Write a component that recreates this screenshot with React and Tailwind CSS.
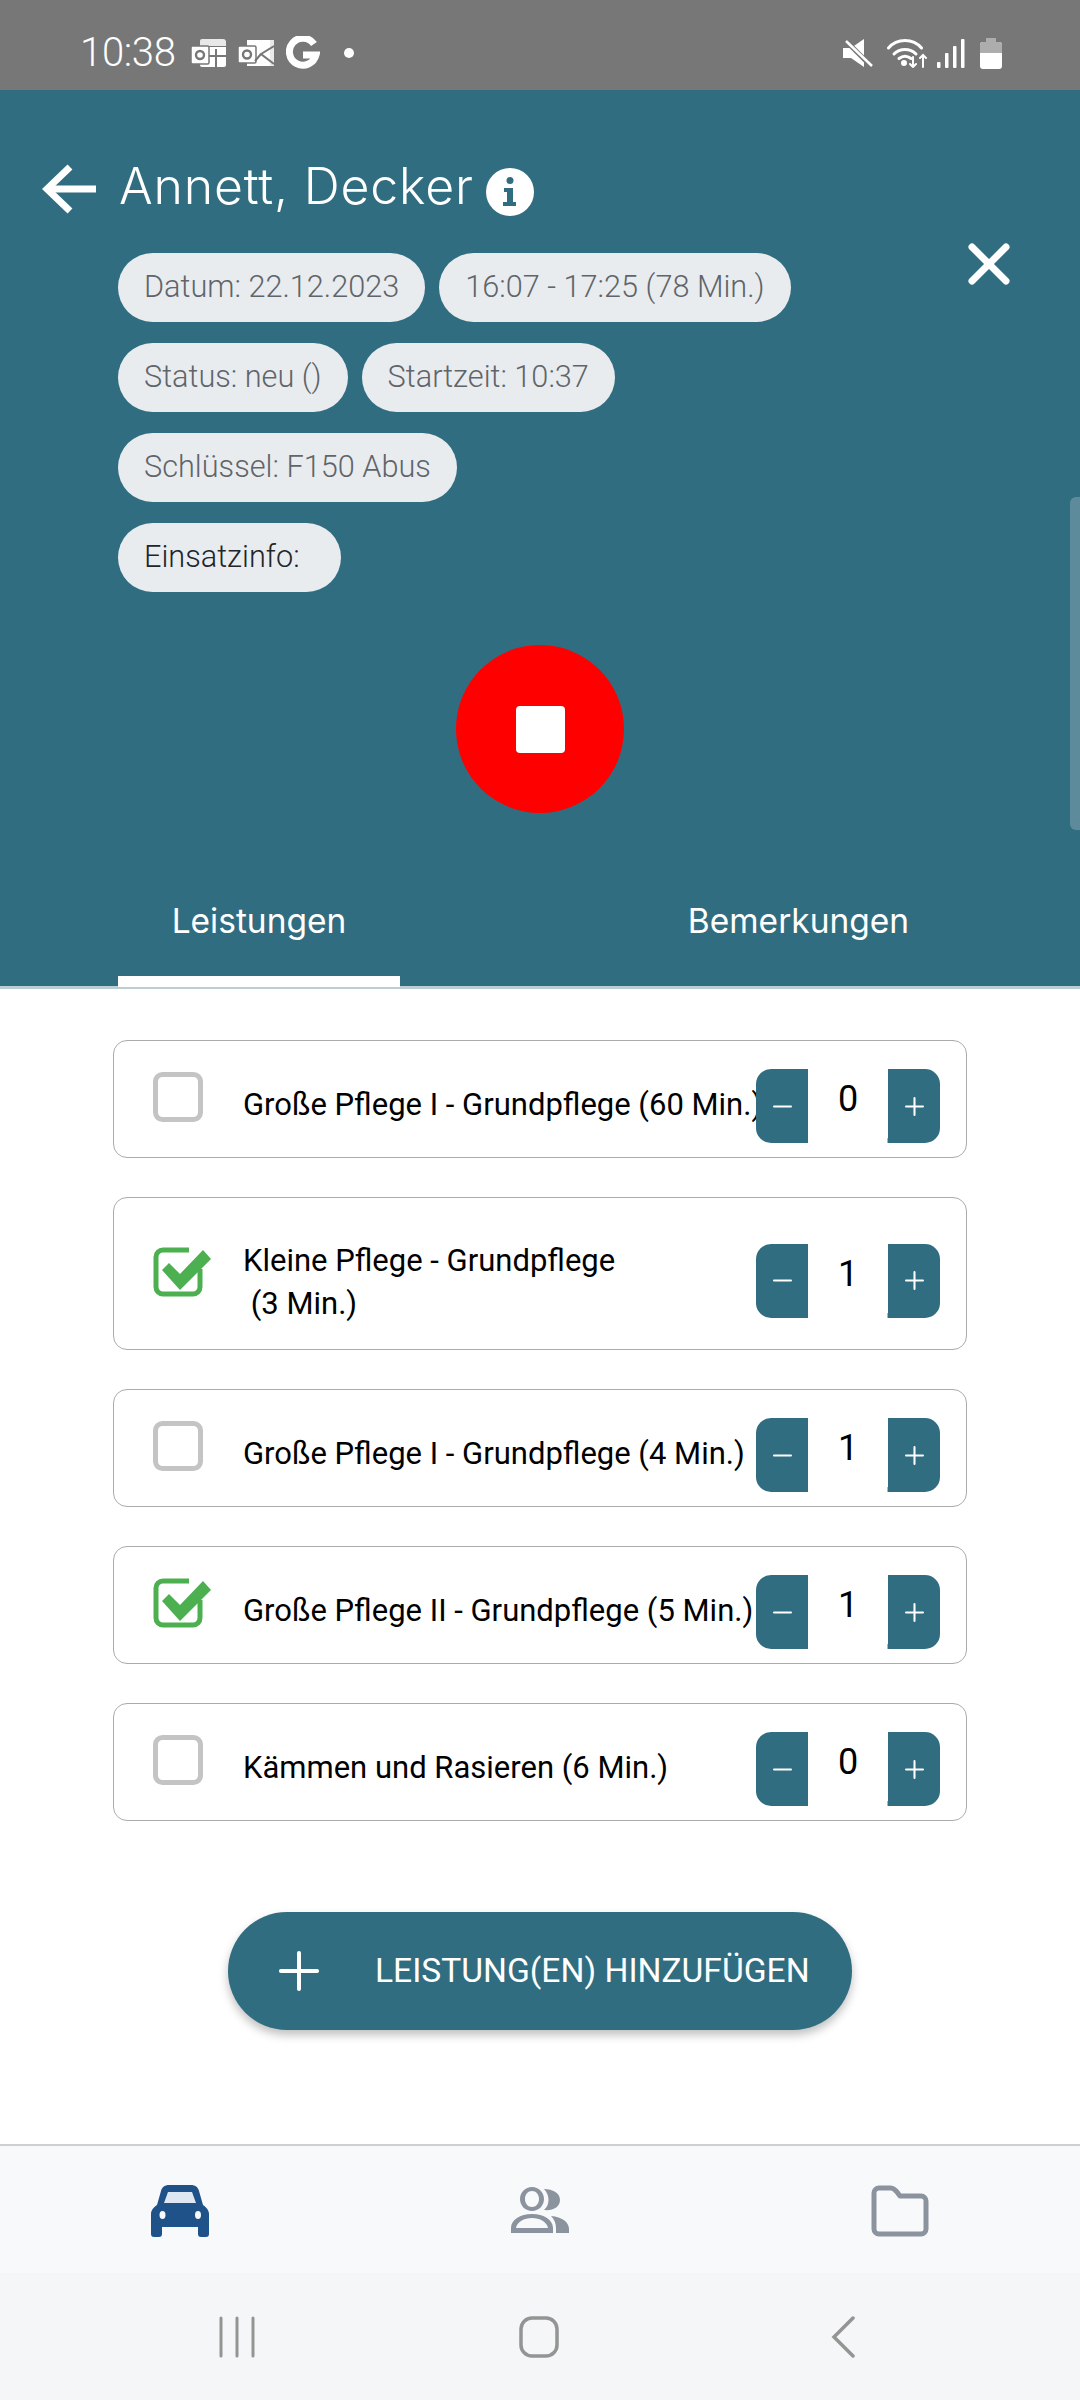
import React from 'react';
import { Plus, Minus } from 'lucide-react';

const services = [
  { label: 'Große Pflege I - Grundpflege (60 Min.)', qty: 0, done: false },
  { label: 'Kleine Pflege - Grundpflege\n (3 Min.)', qty: 1, done: true },
  { label: 'Große Pflege I - Grundpflege (4 Min.)', qty: 1, done: false },
  { label: 'Große Pflege II - Grundpflege (5 Min.)', qty: 1, done: true },
  { label: 'Kämmen und Rasieren (6 Min.)', qty: 0, done: false },
];

const pillRows = [
  ['Datum: 22.12.2023', '16:07 - 17:25 (78 Min.)'],
  ['Status: neu ()', 'Startzeit: 10:37'],
  ['Schlüssel: F150 Abus'],
];

const StatusBar = () => (
  <div className="h-[90px] shrink-0 bg-[#777777] flex items-center justify-between pl-[80px] pr-[78px] pt-[16px] text-white">
    <div className="flex items-center">
      <span className="text-[40px] font-light leading-none font-['Roboto',sans-serif] tracking-[-0.3px]">10:38</span>
      {/* office app notification */}
      <svg viewBox="0 0 35 30" className="w-[35px] h-[30px] ml-[15px]">
        <path d="M11 1h21a3 3 0 0 1 3 3v4H9V3a2 2 0 0 1 2-2z" fill="#e8e8e8" />
        <path d="M9 9h26v18a2 2 0 0 1-2 2H11a2 2 0 0 1-2-2z" fill="#fff" />
        <rect x="0" y="8" width="18" height="18" rx="1.5" fill="#fff" stroke="#777" strokeWidth="1.5" />
        <circle cx="9" cy="17" r="4" fill="none" stroke="#777" strokeWidth="2.4" />
        <path d="M25 11v18M18 18h17" stroke="#777" strokeWidth="2" fill="none" />
      </svg>
      {/* outlook notification */}
      <svg viewBox="0 0 36 30" className="w-[36px] h-[30px] ml-[12px]">
        <path d="M9 2h23v26H9z" fill="#fff" />
        <path d="M32 2l4 0v26h-4z" fill="#e8e8e8" />
        <rect x="0" y="8" width="18" height="17" rx="1.5" fill="#fff" stroke="#777" strokeWidth="1.5" />
        <circle cx="9" cy="16.500" r="4" fill="none" stroke="#777" strokeWidth="2.4" />
        <path d="M36 8L23 16l13 10M23 16l-6 7" stroke="#777" strokeWidth="2" fill="none" />
      </svg>
      {/* Google mark */}
      <svg viewBox="0 0 34 34" className="w-[34px] h-[34px] ml-[12px]" fill="none" stroke="#fff" strokeWidth="7">
        <path d="M28 8A13.5 13.5 0 1 0 30 19H17" />
      </svg>
      <span className="ml-[24px] w-[10px] h-[10px] rounded-full bg-white" />
    </div>
    <div className="flex items-center">
      <svg viewBox="0 0 30 30" className="w-[30px] h-[30px]">
        <path d="M0 10h8l13-9v28L8 20H0z" fill="#fff" />
        <path d="M1 1l27 27" stroke="#777" strokeWidth="5" />
        <path d="M3 3l26 25" stroke="#fff" strokeWidth="2.500" />
      </svg>
      <svg viewBox="0 0 42 30" className="w-[42px] h-[30px] ml-[14px]" fill="none" stroke="#fff" strokeWidth="3" strokeLinecap="round">
        <path d="M1.500 10C10 0 26 0 34.500 10" />
        <path d="M7 16c6-6 16-6 22 0" />
        <path d="M12 20.500c4-3 8-3 12 0" />
        <circle cx="17" cy="25" r="1.500" fill="#fff" />
        <path d="M26 19v10M23 26l3 3 3-3M36 29V17M33 20l3-3 3 3" strokeWidth="2" />
      </svg>
      <svg viewBox="0 0 28 30" className="w-[28px] h-[30px] ml-[8px]" fill="#fff">
        <rect x="0" y="24" width="3.500" height="6" rx="1" />
        <rect x="8" y="15" width="3.500" height="15" rx="1" />
        <rect x="16" y="8" width="3.500" height="22" rx="1" />
        <rect x="24" y="1" width="3.500" height="29" rx="1" />
      </svg>
      <svg viewBox="0 0 22 31" className="w-[22px] h-[31px] ml-[15px]">
        <path d="M6 0h10v4h3a3 3 0 0 1 3 3v21a3 3 0 0 1-3 3H3a3 3 0 0 1-3-3V7a3 3 0 0 1 3-3h3z" fill="#fff" />
        <path d="M6 0h10v4h3a3 3 0 0 1 3 3v8H0V7a3 3 0 0 1 3-3h3z" fill="#adadad" />
      </svg>
    </div>
  </div>
);

const BackArrow = () => (
  <svg viewBox="0 0 54 50" className="w-[54px] h-[50px]" fill="none" stroke="#fff" strokeWidth="7">
    <path d="M54 25H6" />
    <path d="M28 3L5 25l23 22" />
  </svg>
);

const InfoBadge = () => (
  <svg viewBox="0 0 48 48" className="w-[48px] h-[48px] ml-[12px] mt-[6px]">
    <circle cx="24" cy="24" r="24" fill="#fff" />
    <circle cx="24" cy="12.500" r="3.500" fill="#316d80" />
    <path d="M18 20h9v14h3v4H17v-4h4v-10h-3z" fill="#316d80" />
  </svg>
);

const Pill = ({ children, dark }) => (
  <span className={`h-[69px] px-[26px] rounded-full bg-[#e9ecef] text-[30.7px] font-light flex items-center font-['Roboto',sans-serif] whitespace-pre ${dark ? 'text-[#212529]' : 'text-[#5f656a]'}`}>
    {children}
  </span>
);

const Header = () => (
  <div className="h-[899px] shrink-0 bg-[#316d80] relative flex flex-col">
    <div className="flex items-center pl-[42px] pt-[72px]">
      <BackArrow />
      <h1 className="ml-[23px] text-[50px] leading-[60px] font-light text-white font-['Inter',sans-serif] tracking-[0.8px] -mt-[6px]">
        Annett, Decker
      </h1>
      <InfoBadge />
    </div>
    <div className="flex justify-between pl-[118px] pr-[70px] mt-[37px]">
      <div className="flex flex-col gap-[21px]">
        {pillRows.map((row) => (
          <div key={row[0]} className="flex gap-[14px]">
            {row.map((text) => (
              <Pill key={text}>{text}</Pill>
            ))}
          </div>
        ))}
        <div className="flex">
          <Pill dark>{'Einsatzinfo:  '}</Pill>
        </div>
      </div>
      <svg viewBox="0 0 42 42" className="w-[42px] h-[42px] mt-[-10px]" stroke="#fff" strokeWidth="7" strokeLinecap="round">
        <path d="M4 4l34 34M38 4L4 38" />
      </svg>
    </div>
    <div className="self-center mt-[53px] w-[168px] h-[168px] rounded-full bg-[#ff0000] flex items-center justify-center">
      <span className="w-[49px] h-[47px] rounded-[4px] bg-white" />
    </div>
    {/* scroll thumb along the header edge */}
    <div className="absolute right-0 top-[407px] w-[10px] h-[333px] rounded-l-[6px] bg-[#5d8b9b]" />
    <div className="mt-auto relative flex border-b-[3px] border-[#bccdd3] h-[95px]">
      <div className="ml-[118px] mt-[7px] w-[282px] h-[40px] text-center text-white text-[33.5px] font-['Inter',sans-serif] leading-[40px] relative">
        Leistungen
        <span className="absolute left-0 right-0 top-[75px] h-[11px] bg-white" />
      </div>
      <div className="ml-[237px] mt-[7px] w-[323px] h-[40px] text-center text-white text-[33.5px] font-['Inter',sans-serif] leading-[40px]">
        Bemerkungen
      </div>
    </div>
  </div>
);

const CheckMark = ({ done }) =>
  done ? (
    <svg viewBox="0 0 58 50" className="w-[58px] h-[50px] shrink-0">
      <path d="M36 3H10a7 7 0 0 0-7 7v30a7 7 0 0 0 7 7h30a7 7 0 0 0 7-7V22" fill="none" stroke="#4caf50" strokeWidth="5" />
      <path d="M9 23l7-7 11 11L50 3l8 9-31 31z" fill="#4caf50" />
    </svg>
  ) : (
    <svg viewBox="0 0 58 50" className="w-[58px] h-[50px] shrink-0">
      <rect x="2.500" y="2.500" width="45" height="45" rx="7" fill="none" stroke="#c4c4c4" strokeWidth="5" />
    </svg>
  );

const Stepper = ({ qty }) => (
  <div className="relative z-10 flex mt-[14px] h-[74px] w-[184px] shrink-0">
    <div className="w-[52px] rounded-l-[15px] bg-[#316d80] flex items-center justify-center text-white">
      <Minus size={29} strokeWidth={1.7} />
    </div>
    <div className="flex-1 bg-white flex justify-center pt-[7px] text-[36px] leading-[46px] text-black font-['Roboto',sans-serif]">
      {qty}
    </div>
    <div className="w-[52px] rounded-r-[15px] bg-[#316d80] flex items-center justify-center text-white">
      <Plus size={29} strokeWidth={1.7} />
    </div>
    <span className="absolute left-[131px] bottom-0 w-px h-[5px] bg-[#b5b5b5]" />
  </div>
);

const ServiceRow = ({ label, qty, done }) => {
  const twoLines = label.includes('\n');
  return (
    <div className={`flex items-center border border-[#ababab] rounded-[14px] pl-[39px] ${twoLines ? 'h-[153px]' : 'h-[118px]'}`}>
      <div className="-mt-[4px]">
        <CheckMark done={done} />
      </div>
      <p className={`ml-[32px] w-[513px] shrink-0 whitespace-pre text-[31px] text-black font-['Roboto',sans-serif] ${twoLines ? 'mt-[17px] leading-[43px]' : 'mt-[12px] leading-[42px]'}`}>
        {label}
      </p>
      <Stepper qty={qty} />
    </div>
  );
};

const BottomNav = () => (
  <div className="mt-auto h-[129px] shrink-0 bg-[#f8f9fb] border-t-[2px] border-[#cfcfcf] flex items-start pt-[39px]">
    <svg viewBox="0 0 58 52" className="w-[58px] h-[52px] ml-[151px]">
      <path d="M18 0h22c4 0 7 2 8 6l4 14c3 2 6 5 6 9v20a3 3 0 0 1-3 3h-5a3 3 0 0 1-3-3v-7H11v7a3 3 0 0 1-3 3H3a3 3 0 0 1-3-3V29c0-4 3-7 6-9l4-14c1-4 4-6 8-6z" fill="#1f5288" />
      <path d="M13 18l4-11h24l4 11z" fill="#dfe8f2" />
      <ellipse cx="11.500" cy="30" rx="3" ry="4" fill="#f8f9fb" />
      <ellipse cx="47" cy="30" rx="3" ry="4" fill="#f8f9fb" />
    </svg>
    <svg viewBox="0 0 58 46" className="w-[58px] h-[46px] ml-[302px] mt-[2px]" fill="#8b949e">
      <path fillRule="evenodd" d="M21 0c6.500 0 12 5 12 12s-5.500 12-12 12S9 19 9 12 14.500 0 21 0zm0 4c-4 0-7 3.500-7 8s3 8 7 8 7-3.500 7-8-3-8-7-8z" />
      <path d="M33 2c9 0 16 4 16 11s-7 11-16 10c3-3 4.500-6 4.500-10S36 5 33 2z" />
      <path fillRule="evenodd" d="M0 46v-5C0 33 9 27 21 27s21 6 21 14v5zm5-5h32c-1-6-8-10-16-10S6 35 5 41z" />
      <path d="M40 29c11 1 18 6 18 13v4H45v-5c0-5-2-9-5-12z" />
    </svg>
    <svg viewBox="0 0 58 52" className="w-[58px] h-[52px] ml-[302px]" fill="none" stroke="#8b949e" strokeWidth="5">
      <path d="M3 8a5 5 0 0 1 5-5h12c3 0 4 2 6 4l3 4h21a5 5 0 0 1 5 5v28a5 5 0 0 1-5 5H8a5 5 0 0 1-5-5z" strokeLinejoin="round" />
    </svg>
  </div>
);

const SystemNav = () => (
  <div className="h-[127px] shrink-0 bg-[#f5f6f7] flex items-start pt-[43px]">
    <svg viewBox="0 0 36 42" className="w-[36px] h-[42px] ml-[219px]" stroke="#949494" strokeWidth="3" strokeLinecap="round">
      <path d="M2 2v38M18 2v38M34 2v38" />
    </svg>
    <svg viewBox="0 0 40 42" className="w-[40px] h-[42px] ml-[264px]" fill="none" stroke="#949494" strokeWidth="3.500">
      <rect x="2" y="2" width="36" height="38" rx="11" />
    </svg>
    <svg viewBox="0 0 24 42" className="w-[24px] h-[42px] ml-[272px]" fill="none" stroke="#949494" strokeWidth="3.500" strokeLinecap="round">
      <path d="M22 2L3 21l19 19" />
    </svg>
  </div>
);

export default function App() {
  return (
    <div className="w-[1080px] h-[2400px] bg-white flex flex-col overflow-hidden font-['Roboto',sans-serif]">
      <StatusBar />
      <Header />
      <div className="flex flex-col items-stretch pl-[113px] pr-[113px] pt-[51px] gap-[39px]">
        {services.map((s) => (
          <ServiceRow key={s.label} {...s} />
        ))}
      </div>
      <div className="flex justify-center mt-[91px]">
        <button className="w-[624px] h-[118px] rounded-full bg-[#316d80] text-white flex items-center pl-[40px] shadow-[0_5px_10px_rgba(0,0,0,0.25)]">
          <Plus size={62} strokeWidth={1.55} />
          <span className="ml-[45px] text-[33.6px] font-['Roboto',sans-serif] whitespace-nowrap">LEISTUNG(EN) HINZUFÜGEN</span>
        </button>
      </div>
      <BottomNav />
      <SystemNav />
    </div>
  );
}
